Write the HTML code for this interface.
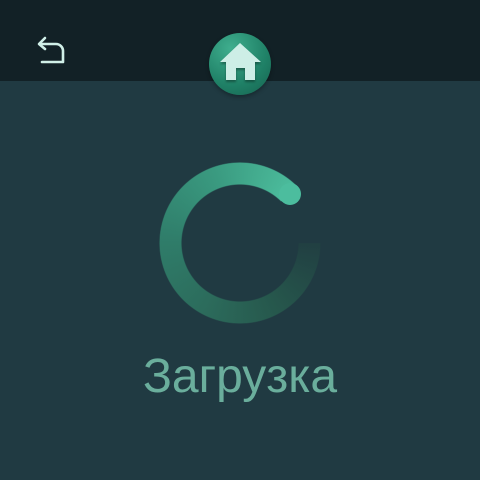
<!DOCTYPE html>
<html><head><meta charset="utf-8"><style>
html,body{margin:0;padding:0}
body{width:480px;height:480px;background:#203a42;position:relative;overflow:hidden;font-family:"Liberation Sans",sans-serif}
.top{position:absolute;left:0;top:0;width:480px;height:81px;background:#122126}
.home{position:absolute;left:209px;top:33px;width:62px;height:62px;border-radius:50%;background:radial-gradient(circle at 35% 25%,#3fae8e,#1f8066 60%,#16624f);box-shadow:0 2px 4px rgba(0,0,0,.3)}
.ring{position:absolute;left:159px;top:162px;width:162px;height:162px;border-radius:50%;
background:conic-gradient(from 90deg,#213f42 0deg,#26574c 60deg,#2c6c5c 120deg,#2f7c69 180deg,#3a9a80 250deg,#48b596 300deg,#4cbd9e 315deg,transparent 315deg);
-webkit-mask:radial-gradient(circle,transparent 58px,#000 59px,#000 80px,transparent 81px);mask:radial-gradient(circle,transparent 58px,#000 59px,#000 80px,transparent 81px)}
.cap{position:absolute;left:279px;top:183px;width:22px;height:22px;border-radius:50%;background:#4cbd9e}
.txt{position:absolute;left:0;width:480px;top:349px;text-align:center;font-size:48px;color:#6aae9c}
</style></head><body>
<div class="top"></div>
<svg style="position:absolute;left:34px;top:34px" width="34" height="30" viewBox="0 0 34 30">
<path d="M6 10 H22 A7 7 0 0 1 29 17 V28 H8" fill="none" stroke="#d0f0e8" stroke-width="2.6" stroke-linecap="round" stroke-linejoin="round"/>
<path d="M11 4 L5 10 L11 15" fill="none" stroke="#d0f0e8" stroke-width="2.6" stroke-linecap="round" stroke-linejoin="round"/>
</svg>
<div class="home"><svg width="62" height="62" viewBox="0 0 62 62">
<path d="M31 10 L52 29 H46 V47 H36 V35 H27 V47 H17 V29 H11 Z" fill="#cdeee6" style="filter:drop-shadow(0 2px 1px rgba(0,0,0,.35))"/></svg></div>
<div class="ring"></div>
<div class="cap"></div>
<div class="txt">Загрузка</div>
</body></html>
